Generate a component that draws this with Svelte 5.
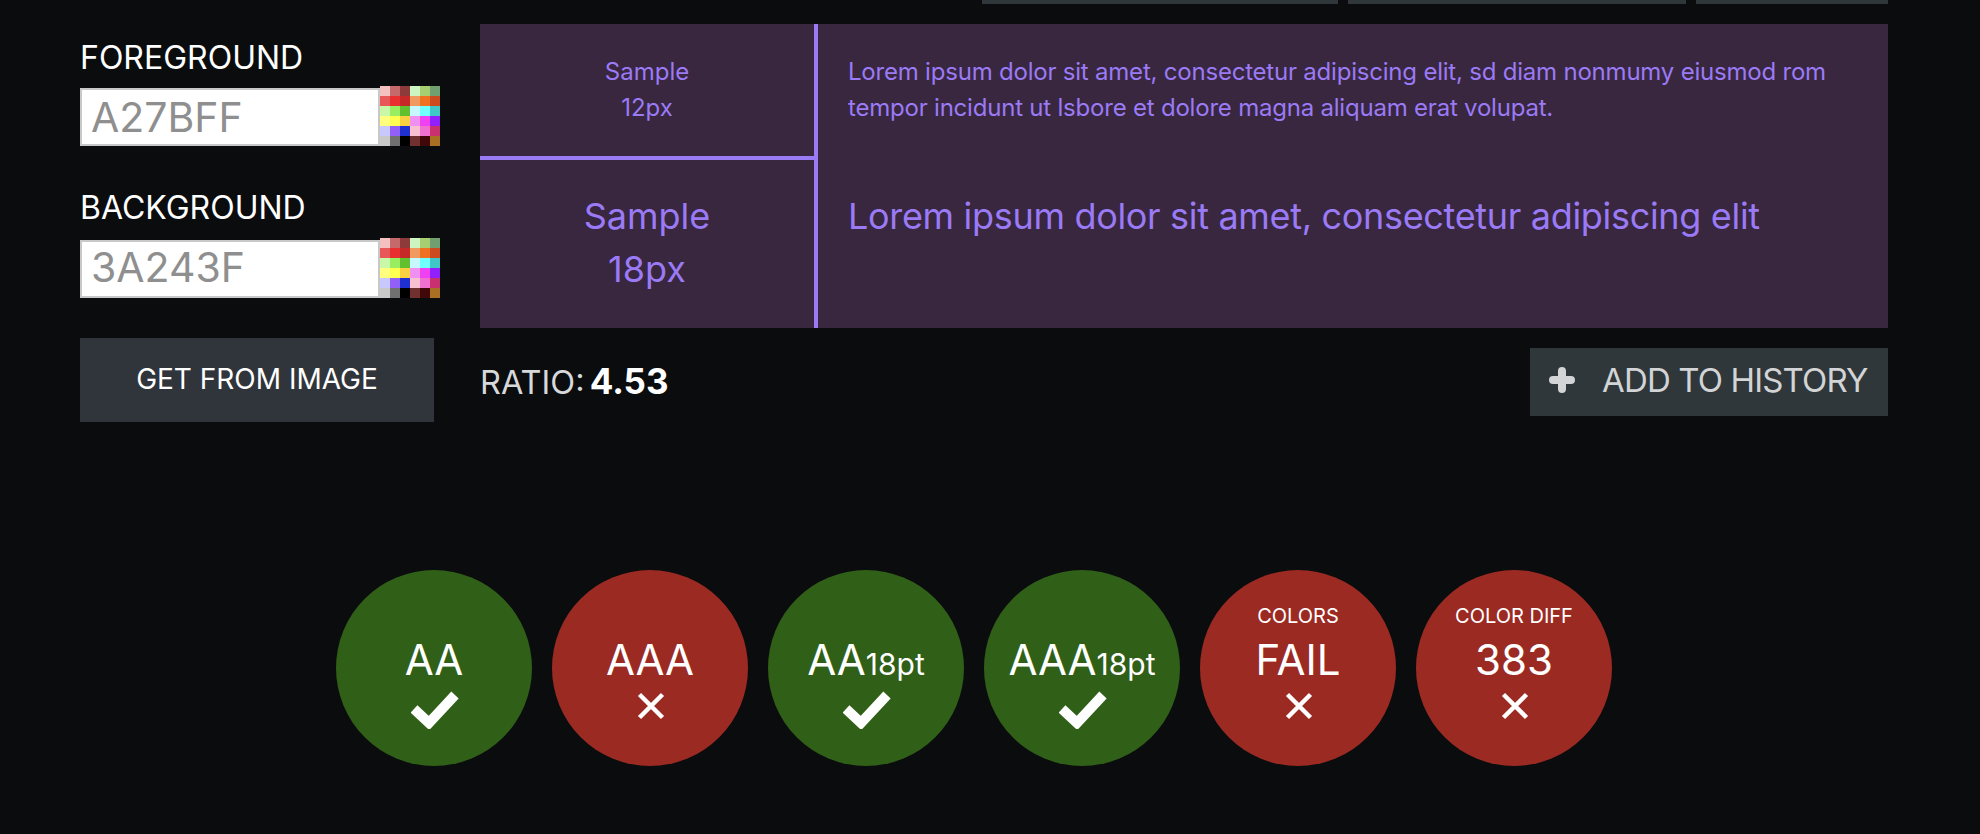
<script>
  const rows = [
    ['#f4c0c0','#c46a6a','#8f3a3a','#ccf5bf','#a6cf72','#70a070'],
    ['#e85858','#e82e2e','#c62828','#f09a60','#ee7020','#cc4a20'],
    ['#c8f8a8','#98ee60','#60c030','#c8f8ff','#70ffff','#40c8c8'],
    ['#ffff80','#ffff50','#f8d040','#f090f0','#f040f0','#9020ff'],
    ['#c8c8ff','#9060f8','#2030d0','#f8c0d0','#f070d0','#c83070'],
    ['#c8c8c8','#707070','#000000','#703030','#400808','#a87020']
  ];
  const swatch = rows.flat();
  const badges = [
    { ok: true, main: 'AA' },
    { ok: false, main: 'AAA' },
    { ok: true, main: 'AA', sub: '18pt' },
    { ok: true, main: 'AAA', sub: '18pt' },
    { ok: false, main: 'FAIL', top: 'COLORS' },
    { ok: false, main: '383', top: 'COLOR DIFF' }
  ];
</script>

<div class="page">
  <div class="tabs">
    <div class="tab t1"></div>
    <div class="tab t2"></div>
    <div class="tab t3"></div>
  </div>

  <div class="main">
    <div class="side">
      <div class="label l1">FOREGROUND</div>
      <div class="field">
        <div class="input">A27BFF</div>
        <div class="swatch">{#each swatch as c}<i style="background:{c}"></i>{/each}</div>
      </div>
      <div class="label l2">BACKGROUND</div>
      <div class="field">
        <div class="input second">3A243F</div>
        <div class="swatch">{#each swatch as c}<i style="background:{c}"></i>{/each}</div>
      </div>
      <div class="get">GET FROM IMAGE</div>
    </div>

    <div class="content">
      <div class="preview">
        <div class="cell size small">Sample<br />12px</div>
        <div class="cell text small">Lorem ipsum dolor sit amet, consectetur adipiscing elit, sd diam nonmumy eiusmod rom tempor incidunt ut lsbore et dolore magna aliquam erat volupat.</div>
        <div class="cell size big">Sample<br />18px</div>
        <div class="cell text big">Lorem ipsum dolor sit amet, consectetur adipiscing elit</div>
      </div>
      <div class="ratio-row">
        <div class="ratio">RATIO: <b>4.53</b></div>
        <div class="add">
          <svg class="plus" viewBox="0 0 26 26" width="26" height="26"><path d="M13 4v18M4 13h18" stroke="#d2d4d6" stroke-width="8" stroke-linecap="round" fill="none"/></svg>
          <span>ADD TO HISTORY</span>
        </div>
      </div>
    </div>
  </div>

  <div class="badges">
    {#each badges as b}
      <div class="badge" class:ok={b.ok}>
        {#if b.top}<div class="top">{b.top}</div>{/if}
        <div class="mainline">{b.main}{#if b.sub}<span class="sub">{b.sub}</span>{/if}</div>
        {#if b.ok}
          <div class="icon check">
            <svg viewBox="0 0 48 38" width="48" height="38"><path d="M3 18 L18 32 L44 4" stroke="#fff" stroke-width="10" fill="none"/></svg>
          </div>
        {:else}
          <div class="icon cross">
            <svg viewBox="0 0 28 28" width="28" height="28"><path d="M2.5 2.5 L25.5 25.5 M25.5 2.5 L2.5 25.5" stroke="#fff" stroke-width="4.5" fill="none"/></svg>
          </div>
        {/if}
      </div>
    {/each}
  </div>
</div>

<style>
  :global(body) {
    margin: 0;
    background: #0a0c0e;
  }
  .page {
    width: 1980px;
    height: 834px;
    overflow: hidden;
    background: #0a0c0e;
    font-family: "Inter", "Liberation Sans", sans-serif;
    color: #fff;
  }
  .tabs {
    height: 4px;
    margin-bottom: 20px;
    display: flex;
    gap: 10px;
    padding-left: 982px;
    width: 906px;
  }
  .tab { background: #2f373b; height: 4px; }
  .t1 { width: 356px; }
  .t2 { width: 338px; }
  .t3 { width: 192px; }
  .main {
    display: flex;
    padding-left: 80px;
    gap: 46px;
  }
  .side { width: 354px; flex: none; }
  .label {
    font-size: 32px;
    line-height: 34px;
  }
  .l1 { padding-top: 17px; padding-bottom: 11px; }
  .l2 { padding-top: 45px; padding-bottom: 13px; }
  .field { display: flex; align-items: flex-end; height: 60px; width: 360px; }
  .input {
    box-sizing: border-box;
    flex: none;
    width: 300px;
    height: 58px;
    background: #fff;
    border: 2px solid #c8c8c8;
    color: #8f8f8f;
    font-size: 41px;
    line-height: 54px;
    padding-left: 9px;
  }
  .second { line-height: 51px; }
  .swatch {
    flex: none;
    display: grid;
    grid-template-columns: repeat(6, 10px);
    grid-auto-rows: 10px;
    width: 60px;
    height: 60px;
    overflow: hidden;
    filter: blur(0.6px);
  }
  .swatch i { display: block; }
  .get {
    margin-top: 40px;
    height: 84px;
    background: #2f353b;
    font-size: 28px;
    line-height: 82px;
    text-align: center;
  }
  .content { width: 1408px; flex: none; }
  .preview {
    display: grid;
    grid-template-columns: 338px 1fr;
    grid-template-rows: 136px 168px;
    background: #39263f;
    color: #9a7bf5;
    height: 304px;
    position: relative;
  }
  .cell { box-sizing: border-box; }
  .size {
    text-align: center;
    border-right: 4px solid #9a7bf5;
  }
  .small { font-size: 24px; line-height: 36px; padding-top: 30px; }
  .size.small { position: relative; }
  .size.small::after {
    content: "";
    position: absolute;
    left: 0;
    right: 0;
    top: 132px;
    height: 4px;
    background: #9a7bf5;
  }
  .text { padding-left: 30px; padding-right: 30px; }
  .text.small { letter-spacing: -0.21px; }
  .big { font-size: 36px; line-height: 53px; padding-top: 30px; }
  .text.big { letter-spacing: -0.32px; }
  .ratio-row {
    display: flex;
    justify-content: space-between;
    align-items: center;
    height: 68px;
    margin-top: 20px;
  }
  .ratio { font-size: 32.5px; color: #d6d8da; word-spacing: -4px; padding-bottom: 2px; }
  .ratio b { color: #fff; font-size: 35px; font-weight: 700; }
  .add {
    width: 358px;
    height: 68px;
    box-sizing: border-box;
    background: #2f373b;
    display: flex;
    align-items: center;
    padding-left: 19px;
    padding-bottom: 4px;
    gap: 27px;
    color: #d2d4d6;
    font-size: 33px;
    letter-spacing: -0.85px;
    white-space: nowrap;
  }
  .badges {
    position: absolute;
    left: 336px;
    top: 570px;
    display: flex;
    gap: 20px;
  }
  .badge {
    width: 196px;
    height: 196px;
    border-radius: 50%;
    background: #9b2a23;
    position: relative;
    text-align: center;
  }
  .badge.ok { background: #305f18; }
  .top {
    position: absolute;
    left: 0; right: 0;
    top: 34px;
    font-size: 20px;
    line-height: 24px;
  }
  .mainline {
    position: absolute;
    left: 0; right: 0;
    top: 66px;
    font-size: 42px;
    line-height: 48px;
    white-space: nowrap;
  }
  .sub { font-size: 30px; }
  .icon {
    position: absolute;
    left: 0; right: 0;
    height: 40px;
    display: flex;
    justify-content: center;
    align-items: center;
  }
  .icon svg { filter: blur(0.4px); }
  .check { top: 120px; left: 2px; }
  .cross { top: 116px; left: 1px; }
</style>
